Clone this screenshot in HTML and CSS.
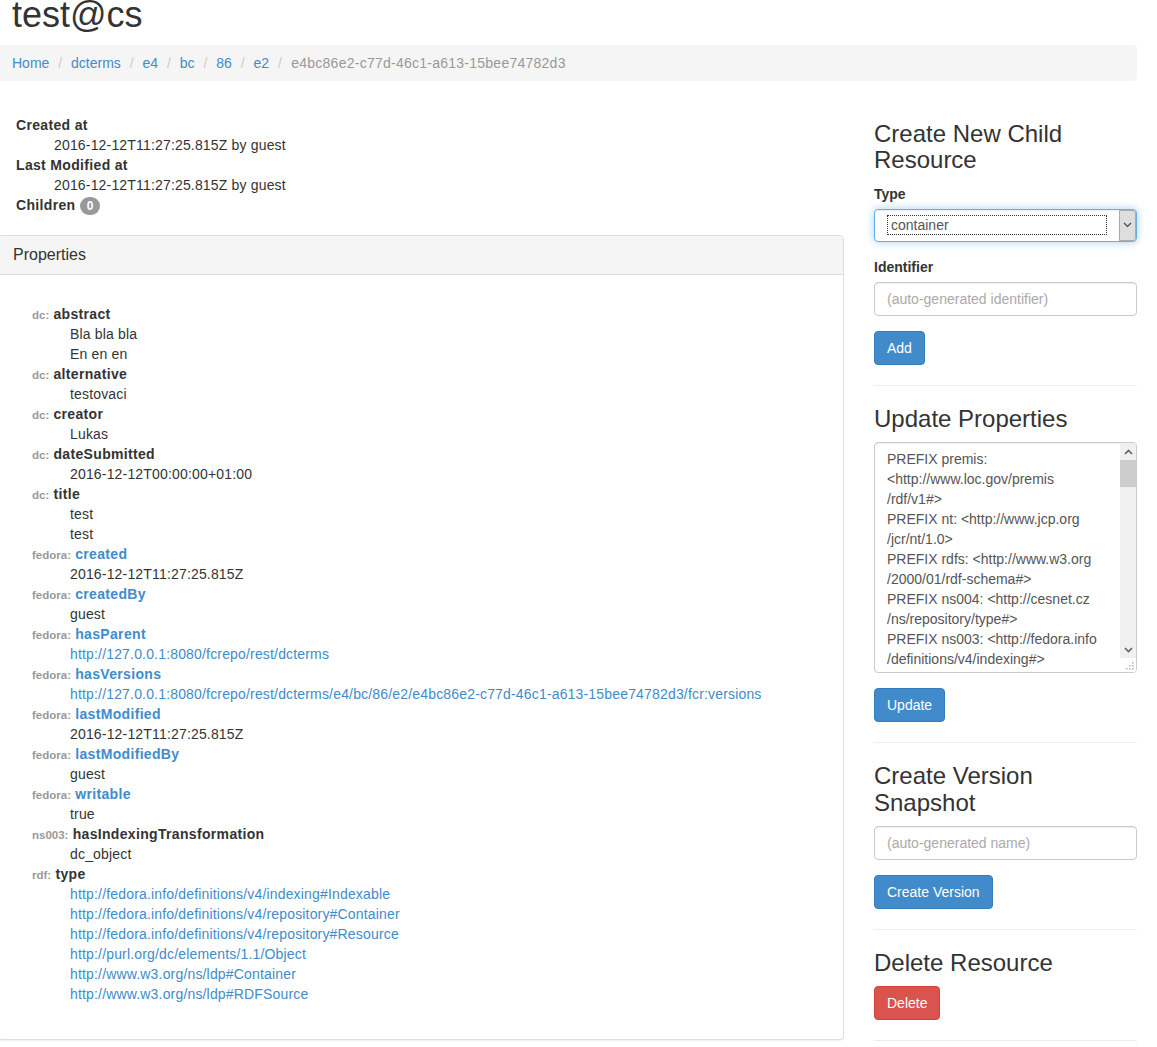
FILE: index.html
```html
<!DOCTYPE html>
<html lang="en">
<head>
<meta charset="utf-8">
<title>test@cs</title>
<link rel="stylesheet" href="styles.css">
</head>
<body>
<div class="container">
  <h1 class="page-title">test@cs</h1>
  <ol class="breadcrumb">
    <li><a href="#">Home</a></li>
    <li><a href="#">dcterms</a></li>
    <li><a href="#">e4</a></li>
    <li><a href="#">bc</a></li>
    <li><a href="#">86</a></li>
    <li><a href="#">e2</a></li>
    <li class="active">e4bc86e2-c77d-46c1-a613-15bee74782d3</li>
  </ol>
  <div class="row">
    <div class="main">
      <dl class="meta">
        <dt>Created at</dt>
        <dd>2016-12-12T11:27:25.815Z by guest</dd>
        <dt>Last Modified at</dt>
        <dd>2016-12-12T11:27:25.815Z by guest</dd>
        <dt>Children <span class="badge">0</span></dt>
      </dl>
      <div class="panel">
        <div class="panel-heading"><h3 class="panel-title">Properties</h3></div>
        <div class="panel-body">
          <dl class="props">
            <dt><span class="ns">dc:</span> abstract</dt>
            <dd>Bla bla bla</dd>
            <dd>En en en</dd>
            <dt><span class="ns">dc:</span> alternative</dt>
            <dd>testovaci</dd>
            <dt><span class="ns">dc:</span> creator</dt>
            <dd>Lukas</dd>
            <dt><span class="ns">dc:</span> dateSubmitted</dt>
            <dd>2016-12-12T00:00:00+01:00</dd>
            <dt><span class="ns">dc:</span> title</dt>
            <dd>test</dd>
            <dd>test</dd>
            <dt><span class="ns">fedora:</span> <a href="#">created</a></dt>
            <dd>2016-12-12T11:27:25.815Z</dd>
            <dt><span class="ns">fedora:</span> <a href="#">createdBy</a></dt>
            <dd>guest</dd>
            <dt><span class="ns">fedora:</span> <a href="#">hasParent</a></dt>
            <dd><a href="#">http://127.0.0.1:8080/fcrepo/rest/dcterms</a></dd>
            <dt><span class="ns">fedora:</span> <a href="#">hasVersions</a></dt>
            <dd><a href="#">http://127.0.0.1:8080/fcrepo/rest/dcterms/e4/bc/86/e2/e4bc86e2-c77d-46c1-a613-15bee74782d3/fcr:versions</a></dd>
            <dt><span class="ns">fedora:</span> <a href="#">lastModified</a></dt>
            <dd>2016-12-12T11:27:25.815Z</dd>
            <dt><span class="ns">fedora:</span> <a href="#">lastModifiedBy</a></dt>
            <dd>guest</dd>
            <dt><span class="ns">fedora:</span> <a href="#">writable</a></dt>
            <dd>true</dd>
            <dt><span class="ns">ns003:</span> hasIndexingTransformation</dt>
            <dd>dc_object</dd>
            <dt><span class="ns">rdf:</span> type</dt>
            <dd><a href="#">http://fedora.info/definitions/v4/indexing#Indexable</a></dd>
            <dd><a href="#">http://fedora.info/definitions/v4/repository#Container</a></dd>
            <dd><a href="#">http://fedora.info/definitions/v4/repository#Resource</a></dd>
            <dd><a href="#">http://purl.org/dc/elements/1.1/Object</a></dd>
            <dd><a href="#">http://www.w3.org/ns/ldp#Container</a></dd>
            <dd><a href="#">http://www.w3.org/ns/ldp#RDFSource</a></dd>
          </dl>
        </div>
      </div>
    </div>
    <div class="side">
      <h3 class="side-title">Create New Child Resource</h3>
      <form class="side-form">
        <div class="form-group">
          <label class="control-label">Type</label>
          <div class="select">
            <span class="select-value"><span class="select-focus">container</span></span>
            <span class="select-btn"><svg width="9" height="6" viewBox="0 0 9 6"><polyline points="1,1 4.5,4.5 8,1" fill="none" stroke="#444" stroke-width="1.2"/></svg></span>
          </div>
        </div>
        <div class="form-group">
          <label class="control-label">Identifier</label>
          <input class="form-control" type="text" placeholder="(auto-generated identifier)">
        </div>
        <button type="button" class="btn btn-primary">Add</button>
      </form>
      <hr>
      <h3 class="side-title">Update Properties</h3>
      <form class="side-form">
        <div class="ta">
          <div class="ta-text">PREFIX premis:
&lt;http://www.loc.gov/premis
/rdf/v1#&gt;
PREFIX nt: &lt;http://www.jcp.org
/jcr/nt/1.0&gt;
PREFIX rdfs: &lt;http://www.w3.org
/2000/01/rdf-schema#&gt;
PREFIX ns004: &lt;http://cesnet.cz
/ns/repository/type#&gt;
PREFIX ns003: &lt;http://fedora.info
/definitions/v4/indexing#&gt;</div>
          <div class="ta-bar">
            <span class="sb-arrow"><svg width="9" height="6" viewBox="0 0 9 6"><polyline points="1,5 4.5,1.5 8,5" fill="none" stroke="#606060" stroke-width="1.6"/></svg></span>
            <span class="sb-thumb"></span>
            <span class="sb-track"></span>
            <span class="sb-arrow sb-down"><svg width="9" height="6" viewBox="0 0 9 6"><polyline points="1,1 4.5,4.5 8,1" fill="none" stroke="#606060" stroke-width="1.6"/></svg></span>
            <span class="sb-corner"><svg width="8" height="8" viewBox="0 0 8 8"><g fill="#b5b5b5"><rect x="6" y="0" width="1.5" height="1.5"/><rect x="3" y="3" width="1.5" height="1.5"/><rect x="6" y="3" width="1.5" height="1.5"/><rect x="0" y="6" width="1.5" height="1.5"/><rect x="3" y="6" width="1.5" height="1.5"/><rect x="6" y="6" width="1.5" height="1.5"/></g></svg></span>
          </div>
        </div>
        <button type="button" class="btn btn-primary">Update</button>
      </form>
      <hr>
      <h3 class="side-title">Create Version Snapshot</h3>
      <form class="side-form">
        <input class="form-control spaced" type="text" placeholder="(auto-generated name)">
        <button type="button" class="btn btn-primary">Create Version</button>
      </form>
      <hr>
      <h3 class="side-title">Delete Resource</h3>
      <form class="side-form">
        <button type="button" class="btn btn-danger">Delete</button>
      </form>
      <hr class="last">
    </div>
  </div>
</div>
</body>
</html>
```

FILE: styles.css
```css
* { box-sizing: border-box; }

html, body {
  margin: 0;
  overflow: hidden;
}

body {
  font-family: "Liberation Sans", Arial, Helvetica, sans-serif;
  font-size: 14px;
  line-height: 20px;
  color: #333;
  background: #fff;
}

a {
  color: #428bca;
  text-decoration: none;
}

.container {
  width: 1140px;
  margin-left: -3px;
}

.page-title {
  font-size: 36px;
  font-weight: normal;
  line-height: 30px;
  margin: 0 0 15px;
  padding-left: 15px;
}

.breadcrumb {
  list-style: none;
  margin: 0 0 20px;
  padding: 8px 15px;
  background: #f5f5f5;
  border-radius: 4px;
}

.breadcrumb li {
  display: inline-block;
}

.breadcrumb li + li::before {
  content: "/\00a0";
  padding: 0 5px;
  color: #ccc;
}

.breadcrumb .active {
  color: #999;
  letter-spacing: 0.25px;
}

.row {
  display: flex;
  gap: 30px;
  align-items: flex-start;
}

.main {
  flex: 0 0 847px;
  padding-top: 14px;
}

.side {
  flex: 0 0 263px;
}

/* metadata */
.meta {
  margin: 0 0 20px 19px;
}

.meta dt,
.props dt {
  font-weight: bold;
  letter-spacing: 0.33px;
}

.meta dd,
.props dd {
  margin-left: 38px;
  letter-spacing: 0.17px;
}

.badge {
  display: inline-block;
  min-width: 10px;
  padding: 3px 7px;
  font-size: 12px;
  font-weight: bold;
  line-height: 1;
  letter-spacing: 0;
  color: #fff;
  text-align: center;
  vertical-align: baseline;
  background: #999;
  border-radius: 10px;
}

/* panel */
.panel {
  border: 1px solid #ddd;
  border-radius: 4px;
  box-shadow: 0 1px 1px rgba(0, 0, 0, 0.05);
  background: #fff;
}

.panel-heading {
  padding: 10px 15px;
  background: #f5f5f5;
  border-bottom: 1px solid #ddd;
  border-radius: 3px 3px 0 0;
}

.panel-title {
  margin: 0;
  font-size: 16px;
  font-weight: normal;
  line-height: 1.1;
  color: #333;
}

.panel-body {
  padding: 15px;
}

.props {
  margin: 14px 0 20px 19px;
}

.ns {
  font-size: 11.5px;
  font-weight: bold;
  line-height: 1;
  letter-spacing: 0;
  color: #999;
}

/* side column */
.side-title {
  font-size: 24px;
  font-weight: normal;
  line-height: 1.1;
  margin: 20px 0 10px;
  color: #333;
}

.side-form {
  margin: 0;
}

.form-group {
  margin-bottom: 15px;
}

.control-label {
  display: inline-block;
  margin-bottom: 5px;
  font-weight: bold;
}

.form-control {
  display: block;
  width: 100%;
  height: 34px;
  padding: 6px 12px;
  font-family: inherit;
  font-size: 14px;
  line-height: 20px;
  color: #555;
  background: #fff;
  border: 1px solid #ccc;
  border-radius: 4px;
  box-shadow: inset 0 1px 1px rgba(0, 0, 0, 0.075);
  outline: none;
}

.form-control::placeholder {
  color: #aaa;
}

.form-control.spaced {
  margin-bottom: 15px;
}

.select {
  display: flex;
  height: 33px;
  border: 1px solid #66afe9;
  border-radius: 4px;
  background: #fff;
  box-shadow: inset 0 1px 1px rgba(0, 0, 0, 0.075), 0 0 8px rgba(102, 175, 233, 0.6);
}

.select-value {
  flex: 1;
  padding: 5px 12px 5px 12px;
  color: #555;
}

.select-focus {
  display: block;
  height: 20px;
  padding: 0 3px;
  line-height: 18px;
  border: 1px dotted #333;
}

.select-btn {
  flex: 0 0 17px;
  display: flex;
  align-items: center;
  justify-content: center;
  background: #dedede;
  border: 1px solid #ababab;
  border-radius: 0 3px 3px 0;
}

/* textarea look-alike */
.ta {
  display: flex;
  height: 231px;
  margin: 1px 0 15px;
  border: 1px solid #ccc;
  border-radius: 4px;
  background: #fff;
  box-shadow: inset 0 1px 1px rgba(0, 0, 0, 0.075);
  overflow: hidden;
}

.ta-text {
  flex: 1;
  padding: 6px 12px;
  white-space: pre;
  overflow: hidden;
  color: #555;
  line-height: 20px;
}

.ta-bar {
  flex: 0 0 16px;
  display: flex;
  flex-direction: column;
  background: #f0f0f0;
}

.sb-arrow {
  flex: 0 0 17px;
  display: flex;
  align-items: center;
  justify-content: center;
}

.sb-down {
  flex-basis: 16px;
}

.sb-thumb {
  flex: 0 0 27px;
  background: #cdcdcd;
}

.sb-track {
  flex: 1;
}

.sb-corner {
  flex: 0 0 14px;
  display: flex;
  align-items: flex-end;
  justify-content: flex-end;
  padding: 0 2px 2px 0;
  background: #fff;
}

/* buttons */
.btn {
  display: inline-block;
  padding: 6px 12px;
  font-family: inherit;
  font-size: 14px;
  line-height: 20px;
  color: #fff;
  border: 1px solid transparent;
  border-radius: 4px;
  cursor: pointer;
  vertical-align: middle;
}

.btn-primary {
  background: #428bca;
  border-color: #357ebd;
}

.btn-danger {
  background: #d9534f;
  border-color: #d43f3a;
}

hr {
  height: 0;
  margin: 20px 0;
  border: 0;
  border-top: 1px solid #eee;
}

hr.last {
  margin-bottom: 0;
}
```
